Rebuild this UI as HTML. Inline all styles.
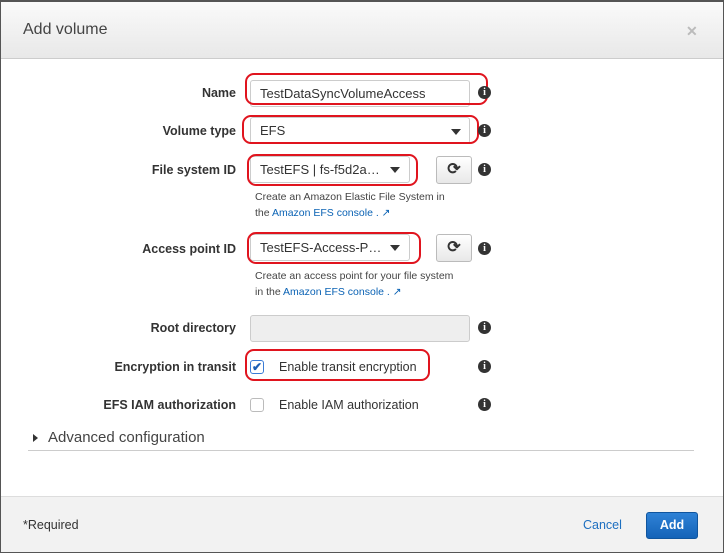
<!DOCTYPE html>
<html><head><style>
*{box-sizing:border-box;margin:0;padding:0}
body{width:724px;height:553px;position:relative;overflow:hidden;font-family:"Liberation Sans",Arial,sans-serif;background:#fff;color:#333}
.a{position:absolute}
.frame{left:0;top:0;width:724px;height:553px;border:1px solid #555;border-top:2px solid #555}
.hdr{left:1px;top:2px;width:722px;height:57px;background:linear-gradient(#fafafa,#e8e8e8);border-bottom:1px solid #ccc}
.lbl{font-size:12.5px;font-weight:bold;color:#333;text-align:right;width:236px;left:0}
.inp{border:1px solid #ccc;border-radius:3px;height:27px;font-size:13px;padding:5px 9px;color:#333;background:#fff}
.red{border:2.5px solid #e0141e;border-radius:9px}
.info{width:13px;height:13px;border-radius:50%;background:#333;color:#fff;font:bold 10px "Liberation Serif",serif;text-align:center;line-height:13px}
.caret{width:0;height:0;border-left:5px solid transparent;border-right:5px solid transparent;border-top:6px solid #333}
.btn{width:36px;height:28px;border:1px solid #bbb;border-radius:3px;background:linear-gradient(#fff,#e8e8e8);font-size:16px;font-weight:bold;text-align:center;line-height:26px;color:#333}
.help{font-size:10.5px;color:#444;line-height:16px}
.help span{color:#0a62b4}
.chk{width:14px;height:14px;border:1px solid #bbb;border-radius:3px;background:#fff}
.ct{font-size:12.5px;color:#333}
</style></head><body>
<div class="a hdr"></div>
<div class="a" style="left:23px;top:21px;font-size:16px;color:#444">Add volume</div>
<div class="a" style="left:686px;top:23px;font-size:14px;color:#bbb;font-weight:bold">✕</div>

<div class="a lbl" style="top:86px">Name</div>
<div class="a inp" style="left:250px;top:80px;width:220px">TestDataSyncVolumeAccess</div>
<div class="a red" style="left:245px;top:73px;width:243px;height:32px"></div>
<div class="a info" style="left:478px;top:86px">i</div>

<div class="a lbl" style="top:124px">Volume type</div>
<div class="a inp" style="left:250px;top:117px;width:220px">EFS</div>
<div class="a caret" style="left:451px;top:129px"></div>
<div class="a red" style="left:242px;top:115px;width:237px;height:29px"></div>
<div class="a info" style="left:478px;top:124px">i</div>

<div class="a lbl" style="top:163px">File system ID</div>
<div class="a inp" style="left:250px;top:156px;width:160px">TestEFS | fs-f5d2a…</div>
<div class="a caret" style="left:390px;top:167px"></div>
<div class="a red" style="left:247px;top:154px;width:171px;height:32px"></div>
<div class="a btn" style="left:436px;top:156px">⟳</div>
<div class="a info" style="left:478px;top:163px">i</div>
<div class="a help" style="left:255px;top:189px">Create an Amazon Elastic File System in<br>the <span>Amazon EFS console . ↗</span></div>

<div class="a lbl" style="top:242px">Access point ID</div>
<div class="a inp" style="left:250px;top:234px;width:160px">TestEFS-Access-P…</div>
<div class="a caret" style="left:390px;top:245px"></div>
<div class="a red" style="left:247px;top:232px;width:174px;height:32px"></div>
<div class="a btn" style="left:436px;top:234px">⟳</div>
<div class="a info" style="left:478px;top:242px">i</div>
<div class="a help" style="left:255px;top:268px">Create an access point for your file system<br>in the <span>Amazon EFS console . ↗</span></div>

<div class="a lbl" style="top:321px">Root directory</div>
<div class="a inp" style="left:250px;top:315px;width:220px;background:#eee"></div>
<div class="a info" style="left:478px;top:321px">i</div>

<div class="a lbl" style="top:360px">Encryption in transit</div>
<div class="a chk" style="left:250px;top:360px;border-color:#3a7bd5;color:#1d5fb5;font-size:12px;line-height:12px;text-align:center;font-weight:bold">✔</div>
<div class="a ct" style="left:279px;top:360px">Enable transit encryption</div>
<div class="a red" style="left:245px;top:349px;width:185px;height:32px"></div>
<div class="a info" style="left:478px;top:360px">i</div>

<div class="a lbl" style="top:398px">EFS IAM authorization</div>
<div class="a chk" style="left:250px;top:398px"></div>
<div class="a ct" style="left:279px;top:398px">Enable IAM authorization</div>
<div class="a info" style="left:478px;top:398px">i</div>

<div class="a" style="left:33px;top:434px;width:0;height:0;border-top:4px solid transparent;border-bottom:4px solid transparent;border-left:5px solid #333"></div>
<div class="a" style="left:48px;top:429px;font-size:15px;color:#444">Advanced configuration</div>
<div class="a" style="left:28px;top:450px;width:666px;height:1px;background:#ccc"></div>

<div class="a" style="left:1px;top:496px;width:722px;height:56px;background:#f2f2f2;border-top:1px solid #ddd"></div>
<div class="a" style="left:23px;top:518px;font-size:12.5px;color:#333">*Required</div>
<div class="a" style="left:583px;top:518px;font-size:12.5px;color:#1d6fc0">Cancel</div>
<div class="a" style="left:646px;top:512px;width:52px;height:27px;border-radius:3px;background:linear-gradient(#2f82d6,#1463b8);border:1px solid #10559e;color:#fff;font-size:12.5px;font-weight:bold;text-align:center;line-height:25px">Add</div>
<div class="a frame"></div>
</body></html>
